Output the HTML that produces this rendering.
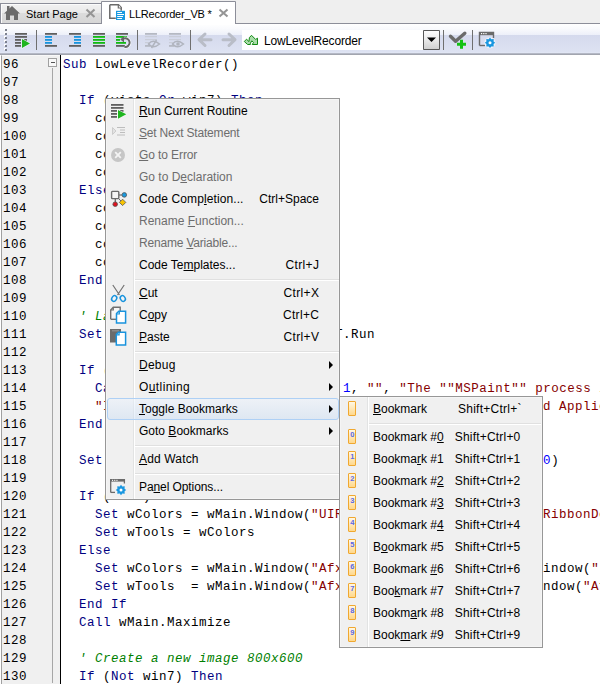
<!DOCTYPE html>
<html><head><meta charset="utf-8">
<style>
*{margin:0;padding:0;box-sizing:border-box}
html,body{width:600px;height:684px;overflow:hidden;background:#fff}
body{position:relative;font-family:"Liberation Sans",sans-serif;font-size:12px;color:#000}
.abs{position:absolute}
/* tab bar */
#tabbar{left:0;top:0;width:600px;height:24px;background:#efefef}
#tabline{left:0;top:23px;width:600px;height:1px;background:#8c8d98}
#tab1{left:0;top:3px;width:102px;height:21px;border:1px solid #8c8d98;background:linear-gradient(#f4f4f4,#e9e9e9 50%,#dedede);box-shadow:inset 1px 1px 0 #fff}
#tab2{left:101px;top:1px;width:135px;height:24px;border:1px solid #8c8d98;border-bottom:none;background:#fff}
.tabtxt{position:absolute;top:8px;font-size:11px;color:#000;white-space:nowrap}
/* toolbar */
#toolbar{left:0;top:24px;width:600px;height:31px;background:linear-gradient(#ffffff 0px,#f4f6fb 5px,#e7eaf5 10px,#d3d8ea 11px,#d3d8ea 24px,#dfe4f3 29px);}
#tbline{left:0;top:54px;width:600px;height:1px;background:#9a9ba6}
.sep{position:absolute;top:30px;width:1px;height:20px;background:#6f6f6f}
/* editor */
#gutter{left:1px;top:55px;width:60px;height:629px;background:#f0f0f0;border-left:1px solid #a0a0a0;border-top:1px solid #f8f8f8}
#fold{left:48px;top:58px;width:9px;height:9px;border:1px solid #a0a0a0;background:#f8f8f8}
#fold:after{content:"";position:absolute;left:1.5px;top:3px;width:4.5px;height:1.3px;background:#555}
#foldline{left:52px;top:68px;width:1px;height:615px;background:#a6a6a6}
#gutline{left:60px;top:55px;width:1px;height:629px;background:#000}
.ln{position:absolute;left:3px;font-family:"Liberation Mono",monospace;font-size:12.5px;letter-spacing:0.5px;color:#000;line-height:18px;height:18px}
.cl{position:absolute;left:63px;font-family:"Liberation Mono",monospace;font-size:12.5px;letter-spacing:0.5px;color:#000;line-height:18px;height:18px;white-space:pre}
.k{color:#000080}.s{color:#850000}.n{color:#0000ff}.c{color:#008000;font-style:italic}
/* menus */
.menu{position:absolute;background:#f0f0f0;border:1px solid #979797;box-shadow:inset 1px 1px 0 #f5f5f5,inset -1px -1px 0 #f5f5f5}
.mgut{position:absolute;width:2px;border-left:1px solid #e2e3e3;border-right:1px solid #fff}
.msep{position:absolute;height:2px;border-top:1px solid #e0e0e0;border-bottom:1px solid #fff}
.hl{position:absolute;border:1px solid #aed0f5;border-radius:3px;background:linear-gradient(rgba(235,243,253,0.5),rgba(200,220,245,0.45))}
.mt{position:absolute;height:22px;line-height:22px;white-space:nowrap;font-size:12px;color:#000}
.ms{position:absolute;height:22px;line-height:22px;white-space:nowrap;font-size:12px;color:#000;text-align:right}
.dis{color:#6d6d6d}
.arr{position:absolute;width:0;height:0;border-left:4.6px solid #000;border-top:4px solid transparent;border-bottom:4px solid transparent;margin-top:1.8px}
.bm{position:absolute;width:8px;height:15px;border:1px solid #f0a830;border-right-width:1.5px;border-bottom-width:1.5px;background:linear-gradient(#fff8e4,#ffd88c);border-radius:1px}
.bm span{position:absolute;left:1.2px;top:0.5px;font-size:7.5px;line-height:7px;color:#5a68e6;font-weight:bold}
u{text-decoration:underline}
</style></head><body>
<svg class="abs" style="left:0;top:0" width="600" height="56" viewBox="0 0 600 56">
<defs>
<linearGradient id="tg1" x1="0" y1="0" x2="0" y2="1">
<stop offset="0" stop-color="#f2f2f2"/><stop offset="0.45" stop-color="#e9e9e9"/><stop offset="0.5" stop-color="#dcdcdc"/><stop offset="1" stop-color="#d6d6d6"/>
</linearGradient>
<linearGradient id="tbg" x1="0" y1="24" x2="0" y2="55" gradientUnits="userSpaceOnUse">
<stop offset="0" stop-color="#ffffff"/><stop offset="0.15" stop-color="#f9fafd"/><stop offset="0.35" stop-color="#edf0f9"/><stop offset="0.36" stop-color="#d5daed"/><stop offset="0.9" stop-color="#dde2f2"/><stop offset="0.93" stop-color="#e2e7f5"/><stop offset="0.94" stop-color="#b8bdcc"/><stop offset="1" stop-color="#a4a7b2"/>
</linearGradient>
</defs>
<rect x="0" y="0" width="600" height="24" fill="#efefef"/>
<rect x="0" y="24" width="600" height="31" fill="url(#tbg)"/>
<rect x="0" y="53" width="600" height="1" fill="#b4b8c5"/><rect x="0" y="54" width="600" height="1" fill="#a2a5af"/>
<rect x="0" y="23" width="600" height="1" fill="#8c8e99"/>
<!-- inactive tab -->
<rect x="0.5" y="3.5" width="101" height="20" fill="url(#tg1)" stroke="#8c8e99"/>
<path d="M1.5 23V4.5H100.5" stroke="#fbfbfb" fill="none"/>
<!-- active tab -->
<path d="M101.5 24V1.5H235.5V24" fill="#fff" stroke="#8c8e99"/>
<rect x="102" y="2" width="133" height="23" fill="#fff"/>
<!-- house icon -->
<path d="M4 13.5L12 6L20 13.5H18V20H14V15.5H10V20H6V13.5Z" fill="#6b6b6b"/>
<rect x="7" y="6" width="2.5" height="5" fill="#6b6b6b"/>
<!-- X buttons -->
<path d="M86.5 9.5L94.5 17M94.5 9.5L86.5 17" stroke="#959595" stroke-width="2.1"/>
<path d="M219.5 9.5L227.5 16.5M227.5 9.5L219.5 16.5" stroke="#959595" stroke-width="2.1"/>
<!-- doc icon -->
<path d="M109.8 4.8H118.5L121.2 7.5V10.8M115.8 18.2H109.8V4.8" fill="#fff" stroke="#6a6a6a" stroke-width="1.5"/>
<path d="M118.3 4.8V8H121.2" fill="#fff" stroke="#6a6a6a" stroke-width="1.2"/>
<rect x="116" y="10.8" width="9" height="9.2" fill="#1a9ae0"/>
<path d="M117.2 12.5H122M117.2 14.5H124M117.2 16.5H123M117.2 18.5H122" stroke="#fff" stroke-width="1"/>
<!-- grip -->
<g><rect x="4" y="28" width="2" height="2" fill="#fff"/><rect x="5" y="29" width="2" height="2" fill="#7d8290"/><rect x="4" y="32" width="2" height="2" fill="#fff"/><rect x="5" y="33" width="2" height="2" fill="#7d8290"/><rect x="4" y="36" width="2" height="2" fill="#fff"/><rect x="5" y="37" width="2" height="2" fill="#7d8290"/><rect x="4" y="40" width="2" height="2" fill="#fff"/><rect x="5" y="41" width="2" height="2" fill="#7d8290"/><rect x="4" y="44" width="2" height="2" fill="#fff"/><rect x="5" y="45" width="2" height="2" fill="#7d8290"/><rect x="4" y="48" width="2" height="2" fill="#fff"/><rect x="5" y="49" width="2" height="2" fill="#7d8290"/></g>
<!-- separators -->
<g fill="#6f6f6f"><rect x="36" y="30" width="1" height="20"/><rect x="137" y="30" width="1" height="20"/><rect x="190" y="30" width="1" height="20"/><rect x="443" y="30" width="1" height="20"/><rect x="472" y="30" width="1" height="20"/></g>
<!-- run icon -->
<g fill="#5f5f5f"><rect x="15" y="33" width="12" height="1.8"/><rect x="15" y="36" width="12" height="1.8"/><rect x="15" y="39" width="6" height="1.8"/><rect x="15" y="42" width="6" height="1.8"/><rect x="15" y="45" width="6" height="1.8"/><rect x="24" y="39" width="3" height="1.8"/></g>
<path d="M21.5 38L31 43.5L21.5 49Z" fill="#fff" opacity="0.8"/>
<path d="M22 39L30 43.5L22 48Z" fill="#1fb51f"/>
<!-- indent left -->
<g fill="#5f5f5f"><rect x="45" y="33" width="12" height="1.8"/><rect x="45" y="45" width="12" height="1.8"/></g>
<g fill="#1793dd"><rect x="45" y="36" width="7" height="1.8"/><rect x="45" y="39" width="7" height="1.8"/><rect x="45" y="42" width="7" height="1.8"/></g>
<!-- indent right -->
<g fill="#5f5f5f"><rect x="69" y="33" width="12" height="1.8"/><rect x="69" y="45" width="12" height="1.8"/></g>
<g fill="#1793dd"><rect x="74" y="36" width="7" height="1.8"/><rect x="74" y="39" width="7" height="1.8"/><rect x="74" y="42" width="7" height="1.8"/></g>
<!-- all green -->
<g fill="#5f5f5f"><rect x="93" y="33" width="12" height="1.8"/><rect x="93" y="45" width="12" height="1.8"/></g>
<g fill="#11bb11"><rect x="93" y="36" width="12" height="1.8"/><rect x="93" y="39" width="12" height="1.8"/><rect x="93" y="42" width="12" height="1.8"/></g>
<!-- uncomment -->
<g fill="#5f5f5f"><rect x="116" y="33" width="12" height="1.8"/><rect x="116" y="45" width="9" height="1.8"/></g>
<g fill="#11bb11"><rect x="116" y="36" width="11" height="1.8"/><rect x="116" y="39" width="4" height="1.8"/><rect x="116" y="42" width="10" height="1.8"/></g>
<path d="M123.5 38.6A4.4 4.4 0 1 1 124.5 47" fill="none" stroke="#fff" stroke-width="3.5" opacity="0.7"/>
<path d="M123.5 38.6A4.4 4.4 0 1 1 124.5 47" fill="none" stroke="#666" stroke-width="2"/>
<path d="M124 36L120.3 39.6L124 42.6Z" fill="#666"/>
<!-- disabled eye icons -->
<g fill="#b5b9c3"><rect x="145" y="33" width="12" height="1.8"/><rect x="145" y="45" width="5" height="1.8"/><rect x="169" y="33" width="12" height="1.8"/><rect x="169" y="45" width="5" height="1.8"/></g>
<g fill="#c9cdd8"><rect x="145" y="36" width="12" height="1.2"/><rect x="145" y="39" width="12" height="1.2"/><rect x="145" y="42" width="4" height="1.2"/><rect x="169" y="36" width="12" height="1.2"/><rect x="169" y="39" width="12" height="1.2"/><rect x="169" y="42" width="4" height="1.2"/></g>
<g fill="none" stroke="#b0b4be" stroke-width="1.5"><path d="M148.5 44Q153 38.5 159.5 44Q153 49.5 148.5 44Z"/><path d="M156.5 40L151.5 48"/><path d="M172.5 44Q177 38.5 183.5 44Q177 49.5 172.5 44Z"/></g>
<circle cx="178" cy="44" r="1.8" fill="#b0b4be"/>
<!-- arrows -->
<g fill="none" stroke="#b9bdc7" stroke-width="3" stroke-linecap="round" stroke-linejoin="round"><path d="M205 34L199 39.7L205 45.5M199.5 39.7H211"/><path d="M229 34L235 39.7L229 45.5M234.5 39.7H223"/></g>
<!-- combo -->
<rect x="242" y="30" width="181" height="20" fill="#fff"/>
<path d="M244.3 41.5L246.5 39.2L249 41.6L249.4 37.6L251.5 35.3L255.6 39.4L257.5 38.2V44.5H252.2L253.5 42.6L251.8 40.8L250.4 43.2V44.5H247.6Z" fill="#a9dca9" stroke="#138a13" stroke-width="1"/>
<linearGradient id="ddg" x1="0" y1="0" x2="0" y2="1"><stop offset="0" stop-color="#fdfdfd"/><stop offset="0.45" stop-color="#ececec"/><stop offset="1" stop-color="#cfcfcf"/></linearGradient>
<path d="M423.5 30.5H439.5V49.5H423.5Z" fill="url(#ddg)" stroke="#575757"/>
<path d="M427 37.5H436L431.5 42Z" fill="#000"/>
<!-- check plus -->
<path d="M450.5 36.3L455.6 41.3L464.8 33.2" fill="none" stroke="#6a6a6a" stroke-width="3.4" stroke-linecap="round" stroke-linejoin="round"/>
<path d="M461.5 39.8V48.8M457 44.3H466" stroke="#12c212" stroke-width="3"/>
<!-- window gear -->
<path d="M479.5 45.5V32.5H493.5V38" fill="none" stroke="#6a6a6a" stroke-width="1.4"/>
<rect x="479" y="32" width="15" height="3.2" fill="#6a6a6a"/>
<g fill="#fff"><rect x="481" y="33" width="1.2" height="1.2"/><rect x="483.2" y="33" width="1.2" height="1.2"/><rect x="485.4" y="33" width="1.2" height="1.2"/></g>
<path d="M479.5 45.5H485" stroke="#6a6a6a" stroke-width="1.4"/>
<g transform="translate(490 42.8)"><circle r="5.6" fill="#fff" opacity=".6"/><path d="M0-5.2L1.3-3.6L3.7-3.7L3.6-1.3L5.2 0L3.6 1.3L3.7 3.7L1.3 3.6L0 5.2L-1.3 3.6L-3.7 3.7L-3.6 1.3L-5.2 0L-3.6-1.3L-3.7-3.7L-1.3-3.6Z" fill="#1a97e0"/><circle r="1.5" fill="#fff"/></g>
</svg>
<div class="tabtxt" style="left:26px">Start Page</div>
<div class="tabtxt" style="left:129px;letter-spacing:-0.2px">LLRecorder_VB *</div>
<div class="abs" style="left:264px;top:34px;font-size:12px;letter-spacing:-0.15px">LowLevelRecorder</div>

<div id="gutter" class="abs"></div>
<div id="gutline" class="abs"></div>
<div id="fold" class="abs"></div>
<div id="foldline" class="abs"></div>
<div class="ln" style="top:56px">96</div>
<div class="ln" style="top:74px">97</div>
<div class="ln" style="top:92px">98</div>
<div class="ln" style="top:110px">99</div>
<div class="ln" style="top:128px">100</div>
<div class="ln" style="top:146px">101</div>
<div class="ln" style="top:164px">102</div>
<div class="ln" style="top:182px">103</div>
<div class="ln" style="top:200px">104</div>
<div class="ln" style="top:218px">105</div>
<div class="ln" style="top:236px">106</div>
<div class="ln" style="top:254px">107</div>
<div class="ln" style="top:272px">108</div>
<div class="ln" style="top:290px">109</div>
<div class="ln" style="top:308px">110</div>
<div class="ln" style="top:326px">111</div>
<div class="ln" style="top:344px">112</div>
<div class="ln" style="top:362px">113</div>
<div class="ln" style="top:380px">114</div>
<div class="ln" style="top:398px">115</div>
<div class="ln" style="top:416px">116</div>
<div class="ln" style="top:434px">117</div>
<div class="ln" style="top:452px">118</div>
<div class="ln" style="top:470px">119</div>
<div class="ln" style="top:488px">120</div>
<div class="ln" style="top:506px">121</div>
<div class="ln" style="top:524px">122</div>
<div class="ln" style="top:542px">123</div>
<div class="ln" style="top:560px">124</div>
<div class="ln" style="top:578px">125</div>
<div class="ln" style="top:596px">126</div>
<div class="ln" style="top:614px">127</div>
<div class="ln" style="top:632px">128</div>
<div class="ln" style="top:650px">129</div>
<div class="ln" style="top:668px">130</div>
<div class="cl" style="top:56px"><span class="k">Sub</span> LowLevelRecorder()</div>
<div class="cl" style="top:74px"></div>
<div class="cl" style="top:92px">  <span class="k">If</span> (vista <span class="k">Or</span> win7) <span class="k">Then</span></div>
<div class="cl" style="top:110px">    colA = 0</div>
<div class="cl" style="top:128px">    colB = 0</div>
<div class="cl" style="top:146px">    colC = 0</div>
<div class="cl" style="top:164px">    colD = 0</div>
<div class="cl" style="top:182px">  <span class="k">Else</span></div>
<div class="cl" style="top:200px">    colA = 1</div>
<div class="cl" style="top:218px">    colB = 1</div>
<div class="cl" style="top:236px">    colC = 1</div>
<div class="cl" style="top:254px">    colD = 1</div>
<div class="cl" style="top:272px">  <span class="k">End If</span></div>
<div class="cl" style="top:290px"></div>
<div class="cl" style="top:308px">  <span class="c">' Launch the application</span></div>
<div class="cl" style="top:326px">  <span class="k">Set</span> wMain = Desktop.ApplicationsT.Run</div>
<div class="cl" style="top:344px"></div>
<div class="cl" style="top:362px">  <span class="k">If</span> (<span class="k">Not</span> wMain.Exists) <span class="k">Then</span></div>
<div class="cl" style="top:380px">    <span class="k">Call</span> LogMessage(vbInformation, <span class="n">1</span>, <span class="s">""</span>, <span class="s">"The ""MSPaint"" process is not running"</span></div>
<div class="cl" style="top:398px">    <span class="s">"Is the MSPaint process running? Please check the Started Applications"</span></div>
<div class="cl" style="top:416px">  <span class="k">End If</span></div>
<div class="cl" style="top:434px"></div>
<div class="cl" style="top:452px">  <span class="k">Set</span> wMain = Desktop.Window("MSPaintApp").Window("Canvas", <span class="n">0</span>)</div>
<div class="cl" style="top:470px"></div>
<div class="cl" style="top:488px">  <span class="k">If</span> (win7) <span class="k">Then</span></div>
<div class="cl" style="top:506px">    <span class="k">Set</span> wColors = wMain.Window(<span class="s">"UIRibbonDockTop"</span>).Window(<span class="s">"UIRibbonDock"</span>)</div>
<div class="cl" style="top:524px">    <span class="k">Set</span> wTools = wColors</div>
<div class="cl" style="top:542px">  <span class="k">Else</span></div>
<div class="cl" style="top:560px">    <span class="k">Set</span> wColors = wMain.Window(<span class="s">"AfxFrameOrView42u_10"</span>, 10).Window(<span class="s">".Colors"</span>)</div>
<div class="cl" style="top:578px">    <span class="k">Set</span> wTools  = wMain.Window(<span class="s">"AfxFrameOrView42u_10"</span>, 9).Window(<span class="s">"AfxTools"</span>)</div>
<div class="cl" style="top:596px">  <span class="k">End If</span></div>
<div class="cl" style="top:614px">  <span class="k">Call</span> wMain.Maximize</div>
<div class="cl" style="top:632px"></div>
<div class="cl" style="top:650px">  <span class="c">' Create a new image 800x600</span></div>
<div class="cl" style="top:668px">  <span class="k">If</span> (<span class="k">Not</span> win7) <span class="k">Then</span></div>


<div class="menu" style="left:105px;top:98px;width:235px;height:402px"></div>
<div class="mgut" style="left:133px;top:99px;height:400px"></div>
<div class="mt" style="left:139px;top:100px;letter-spacing:-0.08px;"><u>R</u>un Current Routine</div>
<div class="mt dis" style="left:139px;top:122px;letter-spacing:-0.2px;"><u>S</u>et Next Statement</div>
<div class="mt dis" style="left:139px;top:144px;letter-spacing:-0.1px;"><u>G</u>o to Error</div>
<div class="mt dis" style="left:139px;top:166px;">Go to D<u>e</u>claration</div>
<div class="mt" style="left:139px;top:188px;letter-spacing:0.1px;">Code Comp<u>l</u>etion...</div>
<div class="ms" style="left:200px;width:119px;top:188px;">Ctrl+Space</div>
<div class="mt dis" style="left:139px;top:210px;">Rename <u>F</u>unction...</div>
<div class="mt dis" style="left:139px;top:232px;letter-spacing:-0.19px;">Rename <u>V</u>ariable...</div>
<div class="mt" style="left:139px;top:254px;">Code Te<u>m</u>plates...</div>
<div class="ms" style="left:200px;width:119.35px;top:254px;letter-spacing:0.35px;">Ctrl+J</div>
<div class="msep" style="left:135px;top:279px;width:204px"></div>
<div class="mt" style="left:139px;top:282px;"><u>C</u>ut</div>
<div class="ms" style="left:200px;width:119.35px;top:282px;letter-spacing:0.35px;">Ctrl+X</div>
<div class="mt" style="left:139px;top:304px;">C<u>o</u>py</div>
<div class="ms" style="left:200px;width:119.35px;top:304px;letter-spacing:0.35px;">Ctrl+C</div>
<div class="mt" style="left:139px;top:326px;"><u>P</u>aste</div>
<div class="ms" style="left:200px;width:119.35px;top:326px;letter-spacing:0.35px;">Ctrl+V</div>
<div class="msep" style="left:135px;top:351px;width:204px"></div>
<div class="mt" style="left:139px;top:354px;letter-spacing:0.25px;"><u>D</u>ebug</div>
<div class="arr" style="left:329px;top:359px"></div>
<div class="mt" style="left:139px;top:376px;letter-spacing:0.41px;">O<u>u</u>tlining</div>
<div class="arr" style="left:329px;top:381px"></div>
<div class="hl" style="left:107px;top:398px;width:232px;height:22px"></div>
<div class="mt" style="left:139px;top:398px;"><u>T</u>oggle Bookmarks</div>
<div class="arr" style="left:329px;top:403px"></div>
<div class="mt" style="left:139px;top:420px;">Goto <u>B</u>ookmarks</div>
<div class="arr" style="left:329px;top:425px"></div>
<div class="msep" style="left:135px;top:445px;width:204px"></div>
<div class="mt" style="left:139px;top:448px;letter-spacing:0.16px;"><u>A</u>dd Watch</div>
<div class="msep" style="left:135px;top:473px;width:204px"></div>
<div class="mt" style="left:139px;top:476px;letter-spacing:-0.09px;">Pa<u>n</u>el Options...</div>
<div class="menu" style="left:339px;top:396px;width:204px;height:252px"></div>
<div class="mgut" style="left:367px;top:397px;height:250px"></div>
<div class="mt" style="left:373px;top:398px"><u>B</u>ookmark</div>
<div class="ms" style="left:440px;width:81.7px;top:398px;letter-spacing:0.25px">Shift+Ctrl+`</div>
<div class="bm" style="left:348px;top:401px"></div>
<div class="msep" style="left:369px;top:423px;width:172px"></div>
<div class="mt" style="left:373px;top:426px">Bookmark #<u>0</u></div>
<div class="ms" style="left:440px;width:80.5px;top:426px;letter-spacing:0.2px">Shift+Ctrl+0</div>
<div class="bm" style="left:348px;top:429px"><span>0</span></div>
<div class="mt" style="left:373px;top:448px">Bookma<u>r</u>k #1</div>
<div class="ms" style="left:440px;width:80.5px;top:448px;letter-spacing:0.2px">Shift+Ctrl+1</div>
<div class="bm" style="left:348px;top:451px"><span>1</span></div>
<div class="mt" style="left:373px;top:470px">Bookmark #<u>2</u></div>
<div class="ms" style="left:440px;width:80.5px;top:470px;letter-spacing:0.2px">Shift+Ctrl+2</div>
<div class="bm" style="left:348px;top:473px"><span>2</span></div>
<div class="mt" style="left:373px;top:492px">Bookmark #<u>3</u></div>
<div class="ms" style="left:440px;width:80.5px;top:492px;letter-spacing:0.2px">Shift+Ctrl+3</div>
<div class="bm" style="left:348px;top:495px"><span>3</span></div>
<div class="mt" style="left:373px;top:514px">Bookmark #<u>4</u></div>
<div class="ms" style="left:440px;width:80.5px;top:514px;letter-spacing:0.2px">Shift+Ctrl+4</div>
<div class="bm" style="left:348px;top:517px"><span>4</span></div>
<div class="mt" style="left:373px;top:536px">B<u>o</u>okmark #5</div>
<div class="ms" style="left:440px;width:80.5px;top:536px;letter-spacing:0.2px">Shift+Ctrl+5</div>
<div class="bm" style="left:348px;top:539px"><span>5</span></div>
<div class="mt" style="left:373px;top:558px">Bookmark <u>#</u>6</div>
<div class="ms" style="left:440px;width:80.5px;top:558px;letter-spacing:0.2px">Shift+Ctrl+6</div>
<div class="bm" style="left:348px;top:561px"><span>6</span></div>
<div class="mt" style="left:373px;top:580px">Boo<u>k</u>mark #7</div>
<div class="ms" style="left:440px;width:80.5px;top:580px;letter-spacing:0.2px">Shift+Ctrl+7</div>
<div class="bm" style="left:348px;top:583px"><span>7</span></div>
<div class="mt" style="left:373px;top:602px">Bookm<u>a</u>rk #8</div>
<div class="ms" style="left:440px;width:80.5px;top:602px;letter-spacing:0.2px">Shift+Ctrl+8</div>
<div class="bm" style="left:348px;top:605px"><span>8</span></div>
<div class="mt" style="left:373px;top:624px">Book<u>m</u>ark #9</div>
<div class="ms" style="left:440px;width:80.5px;top:624px;letter-spacing:0.2px">Shift+Ctrl+9</div>
<div class="bm" style="left:348px;top:627px"><span>9</span></div>
<svg class="abs" style="left:106px;top:100px" width="27" height="398" viewBox="106 100 27 398">
<!-- run -->
<g fill="#5f5f5f"><rect x="111" y="104" width="12.5" height="1.8"/><rect x="111" y="107" width="12.5" height="1.8"/><rect x="111" y="110" width="6" height="1.8"/><rect x="111" y="113" width="6" height="1.8"/><rect x="111" y="116" width="6" height="1.8"/><rect x="120" y="110" width="3.5" height="1.8"/></g>
<path d="M117.3 109L127 114.2L117.3 119.5Z" fill="#fff" opacity="0.85"/>
<path d="M118 110L126.3 114.2L118 118.8Z" fill="#1fb51f"/>
<!-- set next (disabled) -->
<path d="M112.5 127.5L116 131L112.5 134.5Z" fill="#e2e2e2" stroke="#c4c4c4" stroke-width="0.8"/>
<g fill="#bdbdbd"><rect x="117" y="127" width="8" height="1"/><rect x="120" y="129.5" width="5" height="1"/><rect x="120" y="132" width="5" height="1"/><rect x="117" y="134.5" width="8" height="1"/></g>
<!-- go to error -->
<circle cx="118" cy="155" r="7" fill="#c6c6c6"/>
<path d="M115.2 152.2L120.8 157.8M120.8 152.2L115.2 157.8" stroke="#f4f4f4" stroke-width="1.8"/>
<!-- code completion -->
<path d="M115.3 199V203" stroke="#6a6a6a" stroke-width="1.3"/>
<path d="M119 195H122" stroke="#777" stroke-width="1.3"/>
<path d="M118.5 198.5L121 201" stroke="#6a6a6a" stroke-width="1"/>
<rect x="111.6" y="191.4" width="7.2" height="7.2" rx="0.8" fill="#f4f4f4" stroke="#6a6a6a" stroke-width="1.4"/>
<circle cx="124.3" cy="194.9" r="2.3" fill="#1a9ae0" stroke="#555" stroke-width="0.8"/>
<circle cx="115.2" cy="204.2" r="2.3" fill="#e0101c" stroke="#555" stroke-width="0.8"/>
<path d="M122.6 199.2L125.8 202.4L122.6 205.6L119.4 202.4Z" fill="#f7c300" stroke="#555" stroke-width="0.8"/>
<!-- cut -->
<path d="M112.8 285L119.5 295M124.2 285L117.5 295" stroke="#727272" stroke-width="1.2" fill="none"/>
<ellipse cx="114.2" cy="298.5" rx="2.3" ry="3" transform="rotate(35 114.2 298.5)" fill="#f4f4f4" stroke="#1893dd" stroke-width="1.5"/>
<ellipse cx="122.8" cy="298.5" rx="2.3" ry="3" transform="rotate(-35 122.8 298.5)" fill="#f4f4f4" stroke="#1893dd" stroke-width="1.5"/>
<!-- copy -->
<path d="M110.7 319.3V310L113.3 307.3H120.2V311" fill="#f6f6f6" stroke="#707070" stroke-width="1.4"/>
<path d="M110.7 310H113.3V307.3" fill="none" stroke="#707070" stroke-width="1.2"/>
<path d="M110.7 319.3H116" stroke="#707070" stroke-width="1.4"/>
<path d="M116.5 323V313.5L118.8 311.3H125.6V323Z" fill="#fff" stroke="#1893dd" stroke-width="1.5"/>
<path d="M116.5 314H119.3V311.3" fill="none" stroke="#1893dd" stroke-width="1.2"/>
<!-- paste -->
<rect x="110" y="329" width="11" height="13.5" fill="#6b6b6b"/>
<rect x="112" y="330" width="7" height="1.5" fill="#8a8a8a"/>
<path d="M116.3 345V334.3L118.6 332.2H125.6V345Z" fill="#fff" stroke="#1893dd" stroke-width="1.5"/>
<path d="M116.3 334.8H119.1V332.2" fill="none" stroke="#1893dd" stroke-width="1.2"/>
<!-- panel options -->
<path d="M110.7 492.4V479.6H124.4V483.5" fill="none" stroke="#6a6a6a" stroke-width="1.3"/>
<rect x="110" y="479" width="15" height="2.6" fill="#6a6a6a"/>
<g fill="#fff"><rect x="112" y="479.8" width="1.1" height="1.1"/><rect x="114.2" y="479.8" width="1.1" height="1.1"/><rect x="116.4" y="479.8" width="1.1" height="1.1"/></g>
<path d="M110.7 492.4H115" stroke="#6a6a6a" stroke-width="1.3"/>
<g transform="translate(121 490)"><circle r="5.8" fill="#f0f0f0"/><path d="M0-5.2L1.3-3.6L3.7-3.7L3.6-1.3L5.2 0L3.6 1.3L3.7 3.7L1.3 3.6L0 5.2L-1.3 3.6L-3.7 3.7L-3.6 1.3L-5.2 0L-3.6-1.3L-3.7-3.7L-1.3-3.6Z" fill="#1a97e0"/><circle r="1.5" fill="#fff"/></g>
</svg>

</body></html>
